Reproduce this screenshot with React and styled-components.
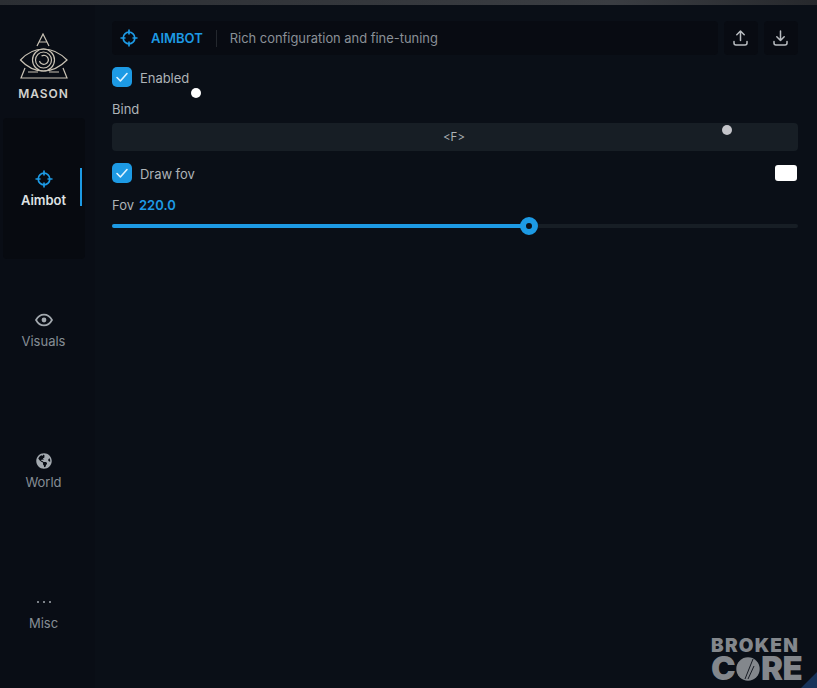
import React from "react";
import styled, { createGlobalStyle } from "styled-components";
import { FaGlobeAmericas } from "react-icons/fa";

const FONT = `Inter, "Liberation Sans", sans-serif`;
const BLUE = "#1d9ae4";

const Global = createGlobalStyle`
  html, body { margin: 0; padding: 0; background: #0a0f17; }
  * { box-sizing: border-box; }
  #root { width: 817px; height: 688px; overflow: hidden; }
`;

const Window = styled.div`
  position: relative;
  width: 817px;
  height: 688px;
  display: flex;
  flex-direction: column;
  font-family: ${FONT};
  background: #0a0f17;
  overflow: hidden;
`;
const TopStrip = styled.div`
  height: 5px;
  flex: none;
  background: linear-gradient(90deg, #2b2e33 0%, #33363b 40%, #3a3d42 75%, #26282c 100%);
`;
const Body = styled.div`
  flex: 1;
  display: flex;
  min-height: 0;
`;
const Sidebar = styled.aside`
  width: 95px;
  flex: none;
  display: flex;
  flex-direction: column;
  background: #090d15;
  padding: 0 10px 0 3px;
`;
const Brand = styled.div`
  height: 113px;
  flex: none;
  display: flex;
  flex-direction: column;
  align-items: center;
  padding: 28px 1px 0 0;
`;
const BrandName = styled.div`
  margin-top: 8px;
  font-size: 12px;
  font-weight: 600;
  letter-spacing: 0.95px;
  color: #d2d2ce;
  line-height: 14px;
`;
const NavItem = styled.div`
  position: relative;
  height: 141px;
  flex: none;
  display: flex;
  flex-direction: column;
  align-items: center;
  justify-content: center;
  padding-right: 1px;
  border-radius: 4px;
  gap: 4px;
  background: ${(p) => (p.$active ? "#070a10" : "transparent")};
  color: ${(p) => (p.$active ? "#dfe2e4" : "#868d95")};
`;
const NavIcon = styled.div`
  width: 20px;
  height: 18px;
  display: flex;
  align-items: center;
  justify-content: center;
  color: ${(p) => (p.$active ? BLUE : "#a3a9af")};
`;
const NavLabel = styled.div`
  font-size: 13px;
  line-height: 16px;
  font-weight: ${(p) => (p.$active ? 600 : 400)};
`;
const ActiveBar = styled.div`
  position: absolute;
  right: 3px;
  top: 50px;
  width: 2px;
  height: 38px;
  background: ${BLUE};
`;
const Main = styled.main`
  flex: 1;
  min-width: 0;
  padding: 16px 19px 0 17px;
  display: flex;
  flex-direction: column;
  background: #0a0f17;
`;
const Header = styled.header`
  height: 34px;
  display: flex;
  gap: 6px;
`;
const TitleBar = styled.div`
  flex: 1;
  display: flex;
  align-items: center;
  padding: 0 8px;
  border-radius: 4px;
  background: #080b12;
`;
const TitleIcon = styled.span`
  display: flex;
  color: ${BLUE};
`;
const TitleText = styled.div`
  margin-left: 13px;
  color: ${BLUE};
  font-size: 13px;
  font-weight: 600;
`;
const Divider = styled.div`
  width: 1px;
  height: 17px;
  margin: 0 13px;
  background: #24282e;
`;
const Subtitle = styled.div`
  color: #8a9097;
  font-size: 12.9px;
`;
const IconButton = styled.button`
  width: 34px;
  height: 34px;
  padding: 0 1px 0 0;
  border: 0;
  border-radius: 4px;
  background: #080b12;
  color: #b9bdc1;
  display: flex;
  align-items: center;
  justify-content: center;
`;
const CheckRow = styled.div`
  display: flex;
  align-items: center;
  height: 20px;
  margin-top: ${(p) => p.$top}px;
  gap: 8px;
`;
const Box = styled.div`
  width: 20px;
  height: 20px;
  border-radius: 5px;
  background: ${BLUE};
  display: flex;
  align-items: center;
  justify-content: center;
`;
const CheckLabel = styled.div`
  color: #aeb3b7;
  font-size: 13px;
  line-height: 16px;
  padding-top: 2px;
  letter-spacing: -0.05px;
`;
const FieldLabel = styled.div`
  margin-top: ${(p) => p.$top}px;
  color: #aeb3b7;
  font-size: 13px;
  line-height: 16px;
`;
const BindBar = styled.div`
  margin-top: 6px;
  height: 28px;
  border-radius: 4px;
  background: #171e25;
  color: #aeb3b7;
  font-size: 11.5px;
  padding-right: 2px;
  display: flex;
  align-items: center;
  justify-content: center;
`;
const Swatch = styled.div`
  margin-left: auto;
  margin-right: 1px;
  width: 22px;
  height: 16px;
  border-radius: 3px;
  background: #fff;
`;
const Value = styled.span`
  color: ${BLUE};
  font-weight: 600;
  margin-left: 5px;
`;
const Track = styled.div`
  position: relative;
  margin-top: 11px;
  height: 4px;
  border-radius: 2px;
  background: #171e25;
`;
const Fill = styled.div`
  height: 100%;
  border-radius: 2px;
  background: ${BLUE};
`;
const Knob = styled.div`
  position: absolute;
  top: 50%;
  width: 18px;
  height: 18px;
  border-radius: 50%;
  transform: translate(-50%, -50%);
  border: 6px solid ${BLUE};
  background: #0a0f17;
`;
const Cursor = styled.div`
  position: absolute;
  left: ${(p) => p.$x - 5}px;
  top: ${(p) => p.$y - 5}px;
  width: 10px;
  height: 10px;
  border-radius: 50%;
  background: ${(p) => p.$color};
`;
const Watermark = styled.div`
  position: absolute;
  left: 711px;
  top: 638px;
  width: 92px;
  color: #83878c;
  font-weight: 900;
  display: flex;
  flex-direction: column;
`;
const MarkTop = styled.div`
  font-size: 19px;
  line-height: 16px;
  letter-spacing: 1.2px;
  white-space: nowrap;
`;
const MarkBottom = styled.div`
  margin-top: 1px;
  height: 27px;
  display: flex;
  align-items: center;
`;
const MarkLetters = styled.span`
  font-size: 33px;
  line-height: 27px;
  letter-spacing: -0.6px;
`;
const Corner = styled.div`
  position: absolute;
  right: 0;
  bottom: 0;
  width: 0;
  height: 0;
  border-left: 16px solid transparent;
  border-bottom: 16px solid #17335a;
`;

const Crosshair = ({ size = 18 }) => (
  <svg width={size} height={size} viewBox="0 0 18 18" fill="none" stroke="currentColor" strokeWidth="1.7">
    <circle cx="9" cy="9" r="5.8" />
    <path d="M9 0.5v5M9 12.5v5M0.5 9h5M12.5 9h5" />
  </svg>
);
const Eye = () => (
  <svg width="18" height="14" viewBox="0 0 18 14" fill="none">
    <path d="M1 7c2-3.6 4.8-5.4 8-5.4S15 3.4 17 7c-2 3.6-4.8 5.4-8 5.4S3 10.6 1 7z" stroke="currentColor" strokeWidth="1.7" />
    <circle cx="9" cy="7" r="2.4" fill="currentColor" />
  </svg>
);
const Logo = () => (
  <svg width="50" height="46" viewBox="0 0 50 46" fill="none" stroke="#c9c2b4" strokeWidth="1.2">
    <path d="M18 13 24 1 30 13M20.500 9h7" />
    <path d="M1.500 27C8 20 16 16 24.500 16S41 20 48 27C41 34 33 38 24.500 38S8 34 1.500 27z" />
    <circle cx="24.500" cy="27" r="11" />
    <circle cx="24.500" cy="27" r="8" />
    <path d="M22.500 23a4.500 4.500 0 1 1-2 5" />
    <path d="M6 35 2 45h46L44 35M9 39h10M30 39h10" />
  </svg>
);
const Upload = () => (
  <svg width="15" height="16" viewBox="0 0 15 16" fill="none" stroke="currentColor" strokeWidth="1.5" strokeLinecap="round" strokeLinejoin="round">
    <path d="M7.500 10.500V1M3.800 4.700 7.500 1l3.700 3.700M1 11.500V13a2 2 0 0 0 2 2h9a2 2 0 0 0 2-2v-1.500" />
  </svg>
);
const Download = () => (
  <svg width="15" height="16" viewBox="0 0 15 16" fill="none" stroke="currentColor" strokeWidth="1.5" strokeLinecap="round" strokeLinejoin="round">
    <path d="M7.500 1v9.500M3.800 6.800l3.700 3.700 3.700-3.700M1 11.500V13a2 2 0 0 0 2 2h9a2 2 0 0 0 2-2v-1.500" />
  </svg>
);
const Check = () => (
  <svg width="14" height="12" viewBox="0 0 14 12" fill="none" stroke="#dff3ff" strokeWidth="1.6" strokeLinecap="round" strokeLinejoin="round">
    <path d="M2 6.500 5.400 10 12 2.500" />
  </svg>
);
const CoreBall = () => (
  <svg width="24" height="24" viewBox="0 0 24 24" style={{ margin: "0 1px", flex: "none" }}>
    <circle cx="12" cy="12" r="11.7" fill="#83878c" />
    <path d="M17 2 9 22M18 9l-6 13" stroke="#0a0f17" strokeWidth="0.9" fill="none" />
  </svg>
);
const Dots = () => (
  <svg width="16" height="4" viewBox="0 0 16 4" fill="currentColor">
    <circle cx="2" cy="2" r="1" />
    <circle cx="8" cy="2" r="1" />
    <circle cx="14" cy="2" r="1" />
  </svg>
);

const nav = [
  { label: "Aimbot", icon: <Crosshair />, active: true },
  { label: "Visuals", icon: <Eye /> },
  { label: "World", icon: <FaGlobeAmericas size={16} /> },
  { label: "Misc", icon: <Dots /> },
];

const fov = { value: 220, percent: 60.8 };

export default function App() {
  return (
    <Window>
      <Global />
      <TopStrip />
      <Body>
        <Sidebar>
          <Brand>
            <Logo />
            <BrandName>MASON</BrandName>
          </Brand>
          {nav.map((n) => (
            <NavItem key={n.label} $active={n.active}>
              <NavIcon $active={n.active}>{n.icon}</NavIcon>
              <NavLabel $active={n.active}>{n.label}</NavLabel>
              {n.active && <ActiveBar />}
            </NavItem>
          ))}
        </Sidebar>
        <Main>
          <Header>
            <TitleBar>
              <TitleIcon><Crosshair /></TitleIcon>
              <TitleText>AIMBOT</TitleText>
              <Divider />
              <Subtitle>Rich configuration and fine-tuning</Subtitle>
            </TitleBar>
            <IconButton><Upload /></IconButton>
            <IconButton><Download /></IconButton>
          </Header>
          <CheckRow $top={12}>
            <Box><Check /></Box>
            <CheckLabel>Enabled</CheckLabel>
          </CheckRow>
          <FieldLabel $top={14}>Bind</FieldLabel>
          <BindBar>&lt;F&gt;</BindBar>
          <CheckRow $top={12}>
            <Box><Check /></Box>
            <CheckLabel>Draw fov</CheckLabel>
            <Swatch />
          </CheckRow>
          <FieldLabel $top={14}>
            Fov<Value>220.0</Value>
          </FieldLabel>
          <Track>
            <Fill style={{ width: `${fov.percent}%` }} />
            <Knob style={{ left: `${fov.percent}%` }} />
          </Track>
        </Main>
      </Body>
      <Cursor $x={196} $y={93} $color="#ffffff" />
      <Cursor $x={727} $y={130} $color="#c4c5ca" />
      <Watermark>
        <MarkTop>BROKEN</MarkTop>
        <MarkBottom>
          <MarkLetters>C</MarkLetters>
          <CoreBall />
          <MarkLetters>RE</MarkLetters>
        </MarkBottom>
      </Watermark>
      <Corner />
    </Window>
  );
}
